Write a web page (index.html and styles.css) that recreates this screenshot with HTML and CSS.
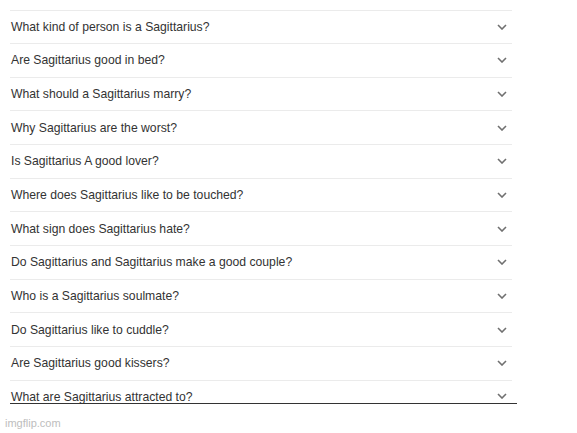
FILE: index.html
```html
<!DOCTYPE html>
<html>
<head>
<meta charset="utf-8">
<link rel="stylesheet" href="styles.css">
</head>
<body>
<div class="page">
  <div class="list">
    <div class="row"><span class="q">What kind of person is a Sagittarius?</span><svg class="chev" viewBox="0 0 10 6"><path d="M1 1l4 4 4-4"/></svg></div>
    <div class="row"><span class="q">Are Sagittarius good in bed?</span><svg class="chev" viewBox="0 0 10 6"><path d="M1 1l4 4 4-4"/></svg></div>
    <div class="row"><span class="q">What should a Sagittarius marry?</span><svg class="chev" viewBox="0 0 10 6"><path d="M1 1l4 4 4-4"/></svg></div>
    <div class="row"><span class="q">Why Sagittarius are the worst?</span><svg class="chev" viewBox="0 0 10 6"><path d="M1 1l4 4 4-4"/></svg></div>
    <div class="row"><span class="q">Is Sagittarius A good lover?</span><svg class="chev" viewBox="0 0 10 6"><path d="M1 1l4 4 4-4"/></svg></div>
    <div class="row"><span class="q">Where does Sagittarius like to be touched?</span><svg class="chev" viewBox="0 0 10 6"><path d="M1 1l4 4 4-4"/></svg></div>
    <div class="row"><span class="q">What sign does Sagittarius hate?</span><svg class="chev" viewBox="0 0 10 6"><path d="M1 1l4 4 4-4"/></svg></div>
    <div class="row"><span class="q">Do Sagittarius and Sagittarius make a good couple?</span><svg class="chev" viewBox="0 0 10 6"><path d="M1 1l4 4 4-4"/></svg></div>
    <div class="row"><span class="q">Who is a Sagittarius soulmate?</span><svg class="chev" viewBox="0 0 10 6"><path d="M1 1l4 4 4-4"/></svg></div>
    <div class="row"><span class="q">Do Sagittarius like to cuddle?</span><svg class="chev" viewBox="0 0 10 6"><path d="M1 1l4 4 4-4"/></svg></div>
    <div class="row"><span class="q">Are Sagittarius good kissers?</span><svg class="chev" viewBox="0 0 10 6"><path d="M1 1l4 4 4-4"/></svg></div>
    <div class="row last"><span class="q">What are Sagittarius attracted to?</span><svg class="chev" viewBox="0 0 10 6"><path d="M1 1l4 4 4-4"/></svg></div>
  </div>
  <div class="rule"></div>
  <div class="mark">imgflip.com</div>
</div>
</body>
</html>
```

FILE: styles.css
```css
html, body {
  margin: 0;
  padding: 0;
  background: #fff;
}
.page {
  width: 577px;
  height: 433px;
  padding-top: 9.5px;
  box-sizing: border-box;
  font-family: "Liberation Sans", Arial, sans-serif;
  overflow: hidden;
}
.list {
  margin-left: 10px;
  width: 502px;
}
.row {
  height: 33.65px;
  box-sizing: border-box;
  border-top: 1px solid #ebebeb;
  display: flex;
  align-items: center;
  justify-content: space-between;
  padding-left: 1px;
  padding-right: 5px;
}
.row.last {
  height: 23.5px;
  align-items: flex-end;
  overflow: hidden;
}
.q {
  font-size: 12.2px;
  color: #333;
}
.row.last .q {
  line-height: 14px;
  margin-bottom: -1px;
}
.chev {
  width: 10px;
  height: 6px;
  fill: none;
  stroke: #707070;
  stroke-width: 1.6;
}
.row.last .chev {
  margin-bottom: 4px;
}
.rule {
  margin-left: 10px;
  width: 507px;
  height: 1px;
  background: #333;
}
.mark {
  margin-top: 13px;
  margin-left: 5px;
  font-size: 11px;
  color: #bdbdbd;
}
```
